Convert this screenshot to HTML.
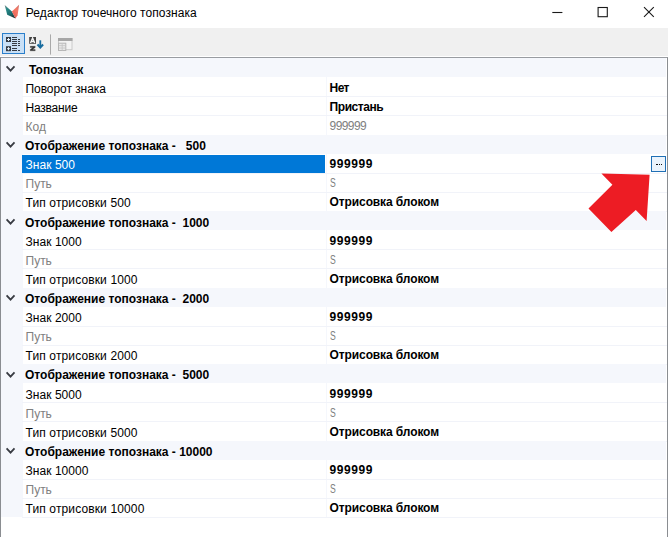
<!DOCTYPE html>
<html><head><meta charset="utf-8"><title>Редактор точечного топознака</title>
<style>
html,body{margin:0;padding:0;}
body{width:668px;height:537px;overflow:hidden;background:#fff;position:relative;font-family:"Liberation Sans",sans-serif;font-size:12px;color:#000;}
.abs{position:absolute;}
.t{position:absolute;white-space:pre;line-height:14px;height:14px;}
.b{font-weight:bold;}
.g{color:#808080;}
#title{left:25.8px;top:6px;font-size:12px;color:#000;letter-spacing:0.07px;}
#toolbar{left:0;top:28px;width:668px;height:28px;background:#f0f0f0;}
#grid{left:0;top:57px;width:666px;height:480px;border:1px solid #8a8d91;border-top-color:#999ca1;border-bottom:none;background:#fff;}
.cat{position:absolute;left:1px;width:664.7px;background:#f5f7fc;}
.mar{position:absolute;left:1px;width:21.5px;background:#f5f7fc;}
.ln{position:absolute;left:22px;width:645px;height:1px;background:#f1f3f9;}
.chev{position:absolute;left:5px;}
</style></head><body>
<div class="t" id="title">Редактор точечного топознака</div>
<div class="abs" id="toolbar"></div>
<div class="abs" id="grid"></div>
<div class="mar" style="top:58.6px;height:458.88px"></div>
<div class="abs" style="left:326px;top:58.6px;width:1px;height:458.88px;background:#f5f7fc"></div>
<div class="cat" style="top:58.30px;height:18.92px"></div>
<svg class="chev" style="top:64.60px" width="12" height="8" viewBox="0 0 12 8"><path d="M1.6 1.4 L5.55 5.7 L9.5 1.4" fill="none" stroke="#383b42" stroke-width="1.8"/></svg>
<div class="t b" style="left:29px;top:62.55px">Топознак</div>
<div class="ln" style="top:96.34px"></div>
<div class="t" style="left:25.5px;top:81.62px;letter-spacing:-0.06px">Поворот знака</div>
<div class="t b" style="left:329.6px;top:80.66px;letter-spacing:-0.6px">Нет</div>
<div class="ln" style="top:115.46px"></div>
<div class="t" style="left:25.5px;top:100.74px;letter-spacing:-0.22px">Название</div>
<div class="t b" style="left:329.6px;top:99.78px;letter-spacing:-0.44px">Пристань</div>
<div class="ln" style="top:134.58px"></div>
<div class="t g" style="left:25.5px;top:119.86px;letter-spacing:0px">Код</div>
<div class="t g" style="left:329.6px;top:118.90px;letter-spacing:-0.6px">999999</div>
<div class="cat" style="top:134.78px;height:18.92px"></div>
<svg class="chev" style="top:141.08px" width="12" height="8" viewBox="0 0 12 8"><path d="M1.6 1.4 L5.55 5.7 L9.5 1.4" fill="none" stroke="#383b42" stroke-width="1.8"/></svg>
<div class="t b" style="left:25px;top:139.03px">Отображение топознака -   500</div>
<div class="ln" style="top:172.82px"></div>
<div class="abs" style="left:22.1px;top:155.00px;width:302.9px;height:17.6px;background:#0078d7"></div>
<div class="t" style="left:25.5px;top:158.10px;color:#fff;letter-spacing:0.05px">Знак 500</div>
<div class="t b" style="left:329.6px;top:157.14px;letter-spacing:0.55px">999999</div>
<div class="ln" style="top:191.94px"></div>
<div class="t g" style="left:25.5px;top:177.22px;letter-spacing:0px">Путь</div>
<div class="t g" style="left:329.6px;top:176.26px;letter-spacing:0px"><span style="display:inline-block;transform:scaleX(0.72);transform-origin:0 50%">S</span></div>
<div class="ln" style="top:211.06px"></div>
<div class="t" style="left:25.5px;top:196.34px;letter-spacing:0.13px">Тип отрисовки 500</div>
<div class="t b" style="left:329.6px;top:195.38px;letter-spacing:-0.11px">Отрисовка блоком</div>
<div class="cat" style="top:211.26px;height:18.92px"></div>
<svg class="chev" style="top:217.56px" width="12" height="8" viewBox="0 0 12 8"><path d="M1.6 1.4 L5.55 5.7 L9.5 1.4" fill="none" stroke="#383b42" stroke-width="1.8"/></svg>
<div class="t b" style="left:25px;top:215.51px">Отображение топознака -  1000</div>
<div class="ln" style="top:249.30px"></div>
<div class="t" style="left:25.5px;top:234.58px;letter-spacing:0.05px">Знак 1000</div>
<div class="t b" style="left:329.6px;top:233.62px;letter-spacing:0.55px">999999</div>
<div class="ln" style="top:268.42px"></div>
<div class="t g" style="left:25.5px;top:253.70px;letter-spacing:0px">Путь</div>
<div class="t g" style="left:329.6px;top:252.74px;letter-spacing:0px"><span style="display:inline-block;transform:scaleX(0.72);transform-origin:0 50%">S</span></div>
<div class="ln" style="top:287.54px"></div>
<div class="t" style="left:25.5px;top:272.82px;letter-spacing:0.13px">Тип отрисовки 1000</div>
<div class="t b" style="left:329.6px;top:271.86px;letter-spacing:-0.11px">Отрисовка блоком</div>
<div class="cat" style="top:287.74px;height:18.92px"></div>
<svg class="chev" style="top:294.04px" width="12" height="8" viewBox="0 0 12 8"><path d="M1.6 1.4 L5.55 5.7 L9.5 1.4" fill="none" stroke="#383b42" stroke-width="1.8"/></svg>
<div class="t b" style="left:25px;top:291.99px">Отображение топознака -  2000</div>
<div class="ln" style="top:325.78px"></div>
<div class="t" style="left:25.5px;top:311.06px;letter-spacing:0.05px">Знак 2000</div>
<div class="t b" style="left:329.6px;top:310.10px;letter-spacing:0.55px">999999</div>
<div class="ln" style="top:344.90px"></div>
<div class="t g" style="left:25.5px;top:330.18px;letter-spacing:0px">Путь</div>
<div class="t g" style="left:329.6px;top:329.22px;letter-spacing:0px"><span style="display:inline-block;transform:scaleX(0.72);transform-origin:0 50%">S</span></div>
<div class="ln" style="top:364.02px"></div>
<div class="t" style="left:25.5px;top:349.30px;letter-spacing:0.13px">Тип отрисовки 2000</div>
<div class="t b" style="left:329.6px;top:348.34px;letter-spacing:-0.11px">Отрисовка блоком</div>
<div class="cat" style="top:364.22px;height:18.92px"></div>
<svg class="chev" style="top:370.52px" width="12" height="8" viewBox="0 0 12 8"><path d="M1.6 1.4 L5.55 5.7 L9.5 1.4" fill="none" stroke="#383b42" stroke-width="1.8"/></svg>
<div class="t b" style="left:25px;top:368.47px">Отображение топознака -  5000</div>
<div class="ln" style="top:402.26px"></div>
<div class="t" style="left:25.5px;top:387.54px;letter-spacing:0.05px">Знак 5000</div>
<div class="t b" style="left:329.6px;top:386.58px;letter-spacing:0.55px">999999</div>
<div class="ln" style="top:421.38px"></div>
<div class="t g" style="left:25.5px;top:406.66px;letter-spacing:0px">Путь</div>
<div class="t g" style="left:329.6px;top:405.70px;letter-spacing:0px"><span style="display:inline-block;transform:scaleX(0.72);transform-origin:0 50%">S</span></div>
<div class="ln" style="top:440.50px"></div>
<div class="t" style="left:25.5px;top:425.78px;letter-spacing:0.13px">Тип отрисовки 5000</div>
<div class="t b" style="left:329.6px;top:424.82px;letter-spacing:-0.11px">Отрисовка блоком</div>
<div class="cat" style="top:440.70px;height:18.92px"></div>
<svg class="chev" style="top:447.00px" width="12" height="8" viewBox="0 0 12 8"><path d="M1.6 1.4 L5.55 5.7 L9.5 1.4" fill="none" stroke="#383b42" stroke-width="1.8"/></svg>
<div class="t b" style="left:25px;top:444.95px">Отображение топознака - 10000</div>
<div class="ln" style="top:478.74px"></div>
<div class="t" style="left:25.5px;top:464.02px;letter-spacing:0.05px">Знак 10000</div>
<div class="t b" style="left:329.6px;top:463.06px;letter-spacing:0.55px">999999</div>
<div class="ln" style="top:497.86px"></div>
<div class="t g" style="left:25.5px;top:483.14px;letter-spacing:0px">Путь</div>
<div class="t g" style="left:329.6px;top:482.18px;letter-spacing:0px"><span style="display:inline-block;transform:scaleX(0.72);transform-origin:0 50%">S</span></div>
<div class="ln" style="top:516.98px"></div>
<div class="t" style="left:25.5px;top:502.26px;letter-spacing:0.13px">Тип отрисовки 10000</div>
<div class="t b" style="left:329.6px;top:501.30px;letter-spacing:-0.11px">Отрисовка блоком</div>

<!-- logo -->
<svg class="abs" style="left:0;top:0" width="30" height="24" viewBox="0 0 30 24">
<defs>
<linearGradient id="lg1" x1="0" y1="0" x2="0.7" y2="1"><stop offset="0" stop-color="#7a8686"/><stop offset="0.3" stop-color="#2a8a88"/><stop offset="0.7" stop-color="#1b6e70"/><stop offset="1" stop-color="#1d3336"/></linearGradient>
<linearGradient id="lg2" x1="1" y1="0" x2="0.3" y2="1"><stop offset="0" stop-color="#c8706c"/><stop offset="0.4" stop-color="#f47a66"/><stop offset="0.8" stop-color="#ee6a5c"/><stop offset="1" stop-color="#9c4a4a"/></linearGradient>
</defs>
<path d="M4.7 4.9 L7.2 14.8 L15.5 18.4 L11.9 11.6 Z" fill="url(#lg1)"/>
<path d="M19.1 4.7 L17.6 15.3 L15.5 18.4 L11.9 11.4 Z" fill="url(#lg2)"/>
</svg>
<!-- window controls -->
<svg class="abs" style="left:540px;top:0" width="128" height="28" viewBox="0 0 128 28">
<path d="M12.3 12.5 H22.4" stroke="#1a1a1a" stroke-width="1.1" fill="none"/>
<rect x="58.1" y="7.5" width="9.2" height="9.2" stroke="#1a1a1a" stroke-width="1.1" fill="none"/>
<path d="M104 7.1 L113.8 16.9 M113.8 7.1 L104 16.9" stroke="#1a1a1a" stroke-width="1.1" fill="none"/>
</svg>
<!-- toolbar icons -->
<svg class="abs" style="left:0;top:28px" width="90" height="28" viewBox="0 0 90 28">
<rect x="2.5" y="5.5" width="22" height="20" fill="#c9e0f6" stroke="#2b7fcb" stroke-width="1"/>
<g fill="#343b44">
<rect x="6" y="9" width="5" height="5"/><rect x="6" y="18.2" width="5" height="5"/>
<rect x="12" y="9" width="5" height="1"/><rect x="12" y="11" width="5" height="1"/><rect x="12" y="13" width="5" height="1"/><rect x="12" y="15" width="5" height="1"/><rect x="12" y="17" width="5" height="1"/>
<rect x="12" y="20" width="5" height="1"/><rect x="12" y="22" width="5" height="1"/>
<rect x="18" y="11" width="2" height="1"/><rect x="18" y="13" width="2" height="1"/><rect x="18" y="15" width="2" height="1"/><rect x="18" y="17" width="2" height="1"/><rect x="18" y="22" width="2" height="1"/>
</g>
<g fill="#e6f0fa"><rect x="7" y="11" width="3" height="1"/><rect x="8" y="10" width="1" height="3"/><rect x="7" y="20.2" width="3" height="1"/><rect x="8" y="19.2" width="1" height="3"/></g>
<!-- AZ -->
<rect x="29.2" y="9" width="6.8" height="6.8" fill="#424242"/>
<path d="M30.5 15 L32.6 10 L34.7 15 M31.3 13.5 H33.9" stroke="#f6f6f6" stroke-width="1.4" fill="none"/>
<path d="M30.2 18.3 H35.2 V19.5 L32.4 21.6 H35.2 V22.8 H30.2 V21.6 L33 19.5 H30.2 Z" fill="#303030" stroke="#303030" stroke-width="0.3"/>
<path d="M40.3 12.3 V19" stroke="#186c9f" stroke-width="1.8" fill="none"/>
<path d="M37.5 16.6 L40.3 19.4 L43.1 16.6" stroke="#186c9f" stroke-width="2.1" fill="none"/>
<!-- separator -->
<rect x="50" y="6.4" width="1" height="20.2" fill="#a9a9a9"/>
<!-- property pages (disabled) -->
<rect x="58.5" y="10.5" width="13.5" height="11.2" fill="#f3f3f3" stroke="#cacaca" stroke-width="1"/>
<rect x="58" y="10" width="14.5" height="3" fill="#a6a6a6"/>
<rect x="58.5" y="15.2" width="7.3" height="7.3" fill="#e8e8e8" stroke="#b6b6b6" stroke-width="1"/>
<path d="M59 17.6 H65.5 M59 20 H65.5 M62.2 15.5 V22.5" stroke="#c4c4c4" stroke-width="0.8" fill="none"/>
</svg>
<!-- ellipsis button -->
<div class="abs" style="left:651px;top:155.9px;width:14.9px;height:16px;border:1px solid #1f6fb5;background:#eaf3fc;box-sizing:border-box"></div>
<div class="abs" style="left:656px;top:163.9px;width:1.8px;height:1.3px;background:#111"></div>
<div class="abs" style="left:658.9px;top:163.9px;width:1.4px;height:1.3px;background:#111"></div>
<div class="abs" style="left:661px;top:163.9px;width:1.4px;height:1.3px;background:#111"></div>
<!-- red arrow -->
<svg class="abs" style="left:580px;top:165px" width="80" height="75" viewBox="580 165 80 75">
<path d="M649.6 174.8 L601.4 173.5 L612.4 184.8 L588.5 208.5 L611.4 231.9 L635.8 210 L646.6 221 Z" fill="#ed1c24"/>
</svg>
</body></html>
